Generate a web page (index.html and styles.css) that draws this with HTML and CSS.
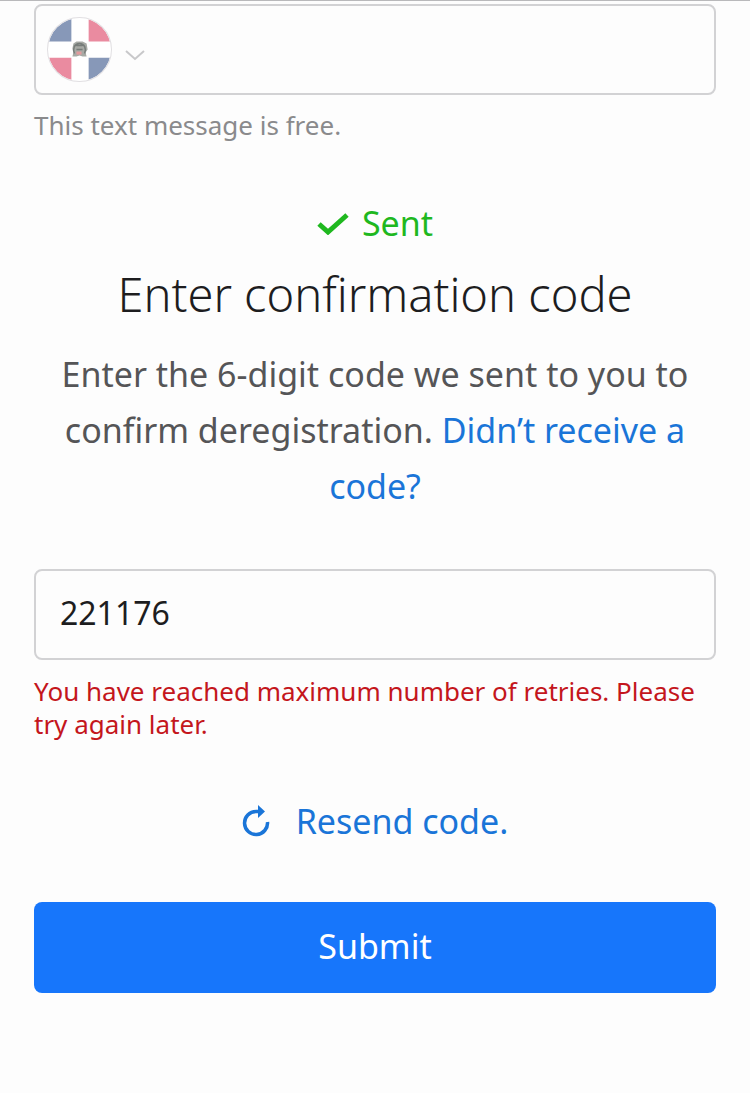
FILE: index.html
```html
<!DOCTYPE html>
<html lang="en">
<head>
<meta charset="utf-8">
<meta name="viewport" content="width=device-width, initial-scale=1">
<title>Enter confirmation code</title>
<link rel="stylesheet" href="styles.css">
</head>
<body>
<main class="page">
  <form class="form">
    <div class="field phone">
      <button class="country" type="button" aria-label="Country: Dominican Republic">
        <svg class="flag" viewBox="0 0 64 64" aria-hidden="true">
          <defs><clipPath id="disc"><circle cx="32" cy="32" r="31"/></clipPath></defs>
          <g clip-path="url(#disc)">
            <path fill="#fff" d="M0 0h64v64H0z"/>
            <path fill="#8798b8" d="M0 0h24v24H0zM41 40h23v24H41z"/>
            <path fill="#ea8ba0" d="M41 0h23v24H41zM0 40h24v24H0z"/>
          </g>
          <circle cx="32" cy="32" r="31.5" fill="none" stroke="#e1dfe2"/>
          <path fill="#a7aaa5" d="M26 26l3-2h6l4 2 1 6-2 3 1 4h-4l-3-1-3 1h-4l1-4-1-4z"/>
          <path fill="none" stroke="#777d7a" stroke-width="1.5" d="M27 36c-2-5 0-10 5-10s7 5 5 10M29 28h6M29 32h6"/>
          <path fill="#e39a9d" d="M29 34h5v3h-5z"/>
        </svg>
        <svg class="chevron" viewBox="0 0 20 12" aria-hidden="true"><path d="M1 2l9 8 9-8"/></svg>
      </button>
      <input class="input" type="tel" aria-label="Phone number">
    </div>
    <p class="hint">This text message is free.</p>

    <p class="sent">
      <svg class="check" viewBox="0 0 32 24" aria-hidden="true"><path d="M2 13l9 8L30 4"/></svg>
      <span>Sent</span>
    </p>
    <h1 class="title">Enter confirmation code</h1>
    <p class="intro">Enter the 6-digit code we sent to you to confirm deregistration. <a class="link" href="#help">Didn’t receive a code?</a></p>

    <div class="field">
      <input class="input code" type="text" inputmode="numeric" value="221176" aria-label="Confirmation code" aria-describedby="error">
    </div>
    <p class="error" id="error">You have reached maximum number of retries. Please try again later.</p>

    <a class="link resend" href="#resend">
      <svg class="reload" viewBox="0 0 28 32" aria-hidden="true"><path class="arc" d="M18 6.500H14A11.500 11.500 0 1 0 25.500 17"/><path class="tip" d="M16 0l7 6.500-7 6.500z"/></svg>
      <span>Resend code.</span>
    </a>
    <button class="submit" type="submit">Submit</button>
  </form>
</main>
</body>
</html>
```
FILE: styles.css
```css
* { box-sizing: border-box; }
body {
  margin: 0;
  background: #fdfdfd;
  color: #1d1d1f;
  font-family: "Noto Sans", "Open Sans", sans-serif;
}
.page { border-top: 1px solid #b9b9bb; padding: 3px 34px 99px; }
.form { display: flex; flex-direction: column; }
.form p, .title { margin: 0; }
.field {
  display: flex;
  height: 91px;
  border: 2px solid #d2d2d4;
  border-radius: 8px;
}
.country {
  display: flex;
  align-items: center;
  gap: 13px;
  padding: 0 10px 0 11px;
  border: 0;
  background: none;
}
.flag { width: 65px; height: 65px; }
.chevron { width: 20px; height: 12px; margin-top: 10px; fill: none; stroke: #c8c8ca; stroke-width: 2; }
.input {
  flex: 1;
  min-width: 0;
  border: 0;
  padding: 0 24px;
  background: none;
  color: inherit;
  font: inherit;
  font-size: 32px;
}
.code { padding-bottom: 4px; }
.hint { padding-top: 11px; color: #8a8a8c; font-size: 26px; line-height: 38px; }
.sent {
  display: flex;
  align-items: center;
  justify-content: center;
  gap: 13px;
  padding-top: 55px;
  color: #1fb81f;
  font-size: 34px;
  line-height: 48px;
}
.check { width: 32px; height: 24px; fill: none; stroke: currentColor; stroke-width: 5; }
.title { padding-top: 11px; text-align: center; font-size: 47px; font-weight: 300; line-height: 72px; }
.intro { padding-top: 16px; text-align: center; color: #555557; font-size: 34px; line-height: 56px; }
.link { color: #1a75d8; text-decoration: none; }
.intro + .field { margin-top: 55px; }
.error { padding-top: 15px; color: #c4161c; font-size: 26px; line-height: 33px; }
.resend {
  display: flex;
  align-items: center;
  justify-content: center;
  gap: 26px;
  margin-top: 56px;
  font-size: 34px;
  line-height: 48px;
}
.reload { width: 28px; height: 32px; }
.arc { fill: none; stroke: currentColor; stroke-width: 3.5; }
.tip { fill: currentColor; }
.submit {
  height: 91px;
  margin-top: 57px;
  padding: 0 0 4px;
  border: 0;
  border-radius: 8px;
  background: #1776fb;
  color: #fff;
  font: inherit;
  font-size: 34px;
}
```
